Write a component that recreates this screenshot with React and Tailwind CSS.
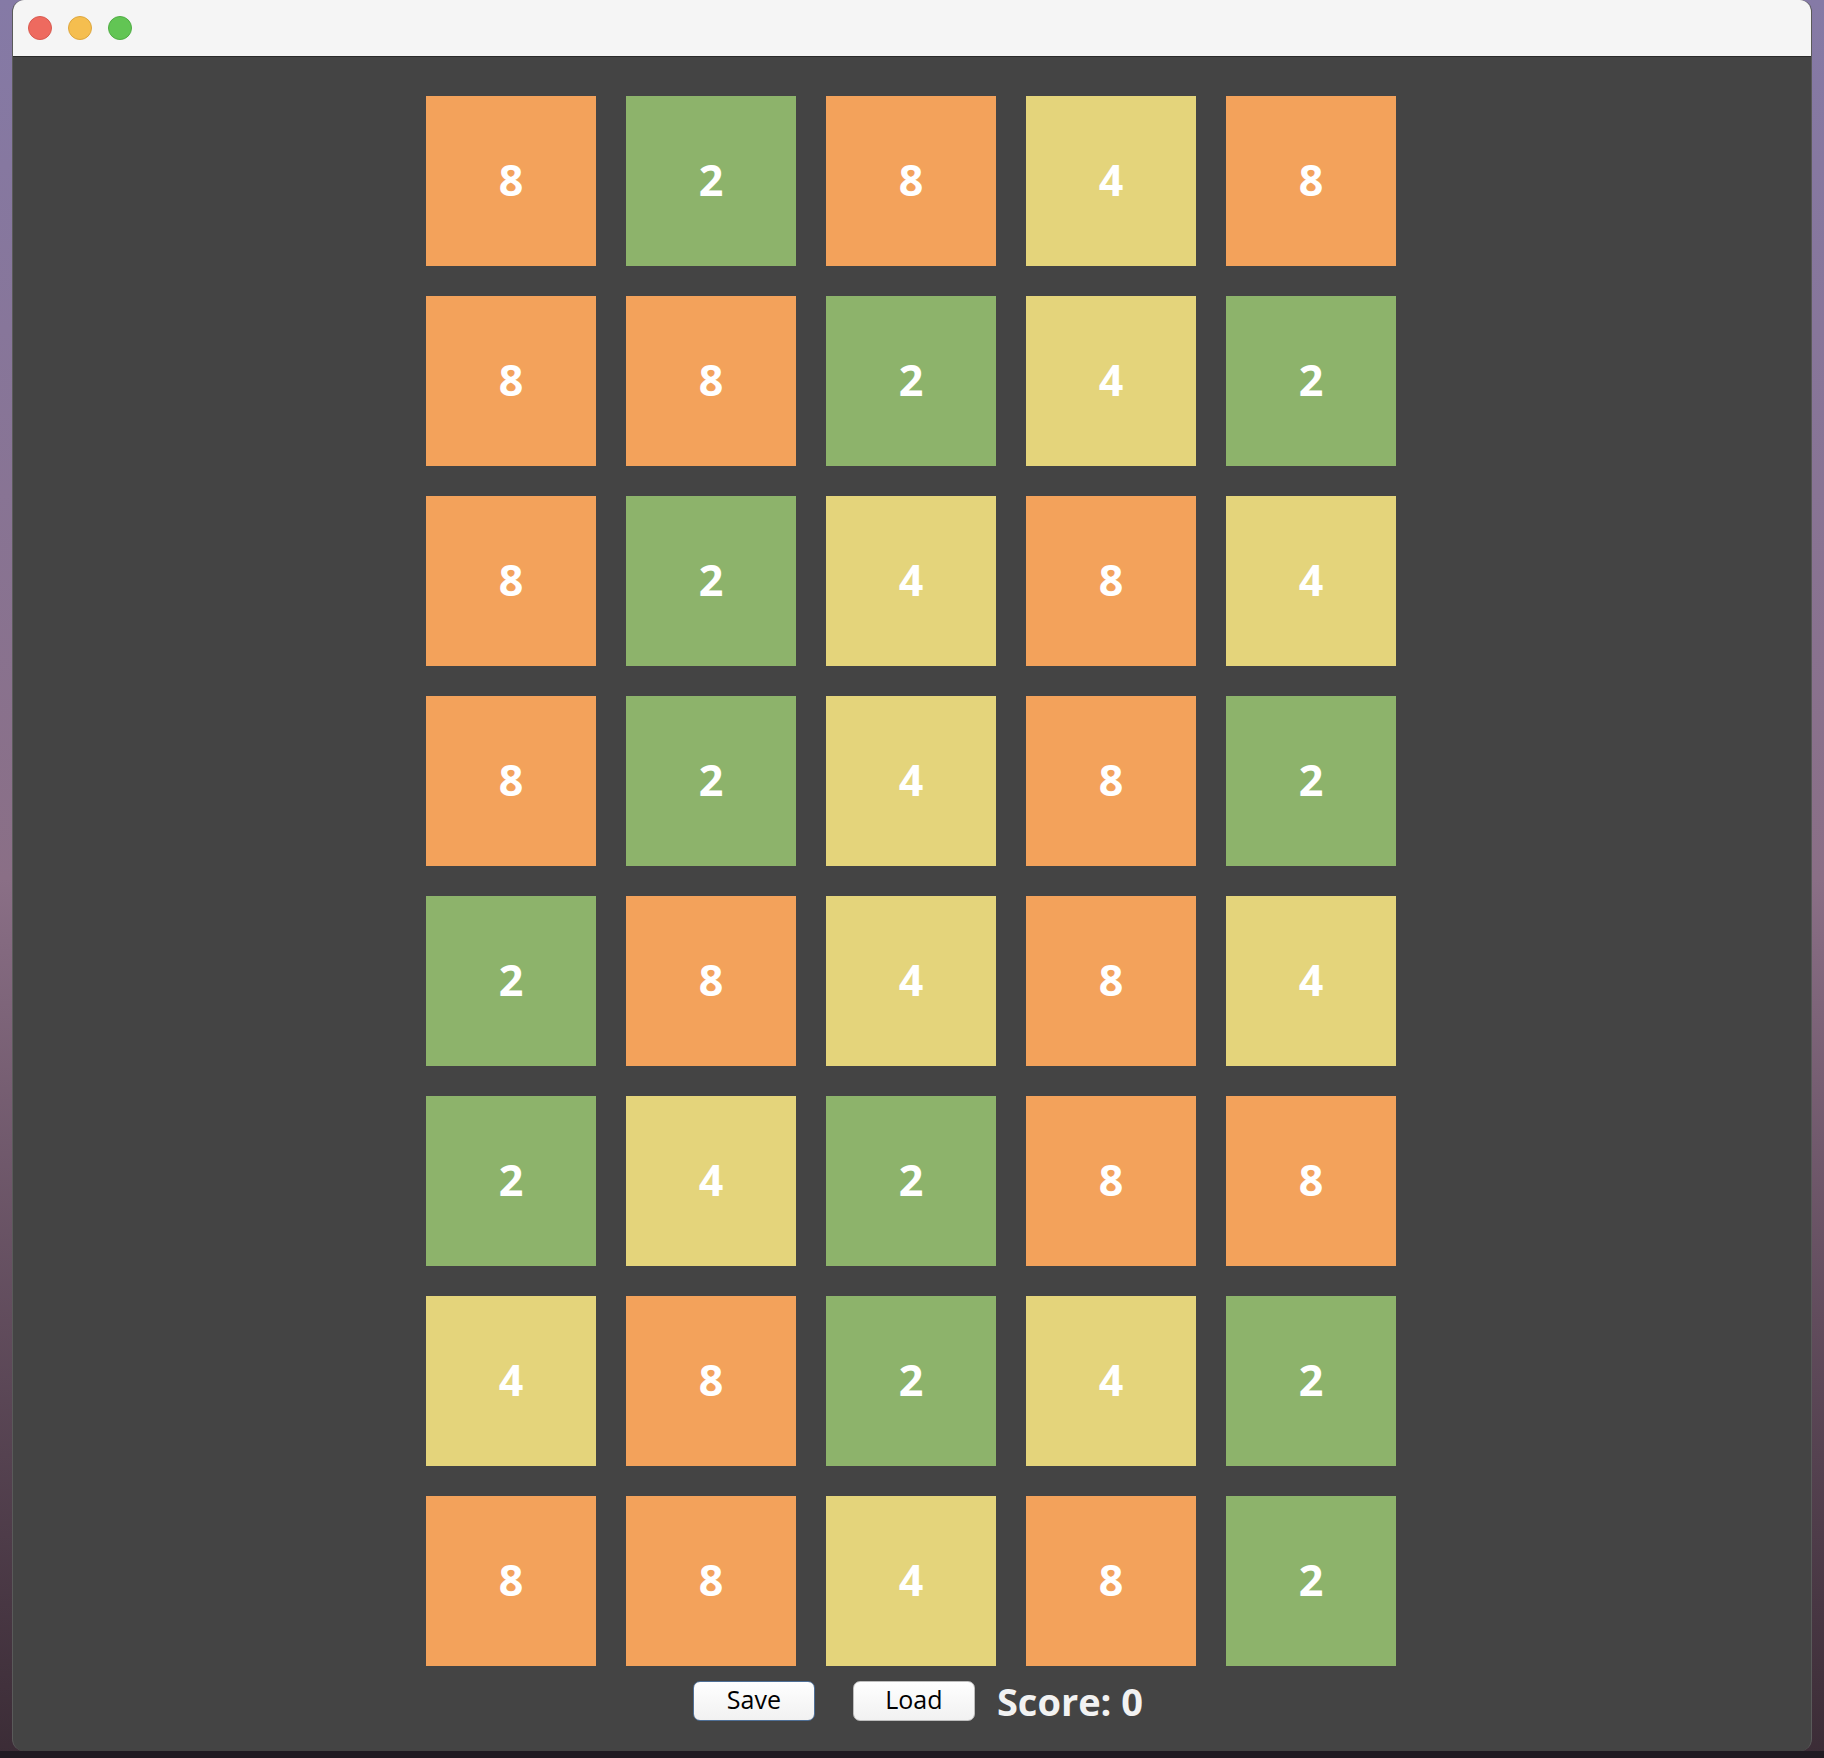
import React from 'react'

const COLORS = {
  8: 'bg-[#f3a25b]',
  2: 'bg-[#8db36b]',
  4: 'bg-[#e4d47b]',
}

const board = [
  [8, 2, 8, 4, 8],
  [8, 8, 2, 4, 2],
  [8, 2, 4, 8, 4],
  [8, 2, 4, 8, 2],
  [2, 8, 4, 8, 4],
  [2, 4, 2, 8, 8],
  [4, 8, 2, 4, 2],
  [8, 8, 4, 8, 2],
]

function Tile({ value }) {
  return (
    <div className={`w-[170px] h-[170px] flex items-center justify-center ${COLORS[value]}`}>
      <span className="text-white font-bold text-[43px] leading-none pb-[3px]">{value}</span>
    </div>
  )
}

export default function App() {
  return (
    <div
      className="w-[1824px] h-[1758px] px-[12px] bg-gradient-to-b from-[#857aa6] via-[#8a6f86] to-[#3b2c36]"
      style={{ fontFamily: '"Open Sans", "Liberation Sans", sans-serif' }}
    >
      <div className="h-[1751px] flex flex-col rounded-[12px] overflow-hidden bg-[#444444] border-x border-[#5a5a5a]">
        {/* Title bar */}
        <div className="h-[57px] shrink-0 bg-[#f5f5f5] border-b border-[#2b2b2b] flex items-center gap-[16px] pl-[15px] pb-[1px]">
          <div className="w-[24px] h-[24px] rounded-full bg-[#ee6a5f] border border-[#d95a50]" />
          <div className="w-[24px] h-[24px] rounded-full bg-[#f5be4f] border border-[#dea73e]" />
          <div className="w-[24px] h-[24px] rounded-full bg-[#62c554] border border-[#50ad44]" />
        </div>

        {/* Board */}
        <div className="flex-1 flex flex-col items-center pt-[39px] pr-[2px]">
          <div className="grid grid-cols-[repeat(5,170px)] gap-x-[30px] gap-y-[30px]">
            {board.flat().map((v, i) => (
              <Tile key={i} value={v} />
            ))}
          </div>

          {/* Controls */}
          <div className="mt-[15px] flex items-center justify-center pl-[14px]">
            <button className="w-[122px] h-[40px] rounded-[7px] border border-[#4f6f96] bg-gradient-to-b from-white to-[#f1f1f1] text-black text-[25px] leading-none pb-[3px]">
              Save
            </button>
            <button className="ml-[38px] w-[122px] h-[40px] rounded-[7px] border border-[#bdbdbd] bg-gradient-to-b from-white to-[#f1f1f1] text-black text-[25px] leading-none pb-[3px]">
              Load
            </button>
            <span className="ml-[22px] text-[#f2f2f2] font-bold text-[38px] leading-none pb-[1px]">Score: 0</span>
          </div>
        </div>
      </div>
      <div className="h-[7px] bg-[#201a22] -mx-[12px]" />
    </div>
  )
}
